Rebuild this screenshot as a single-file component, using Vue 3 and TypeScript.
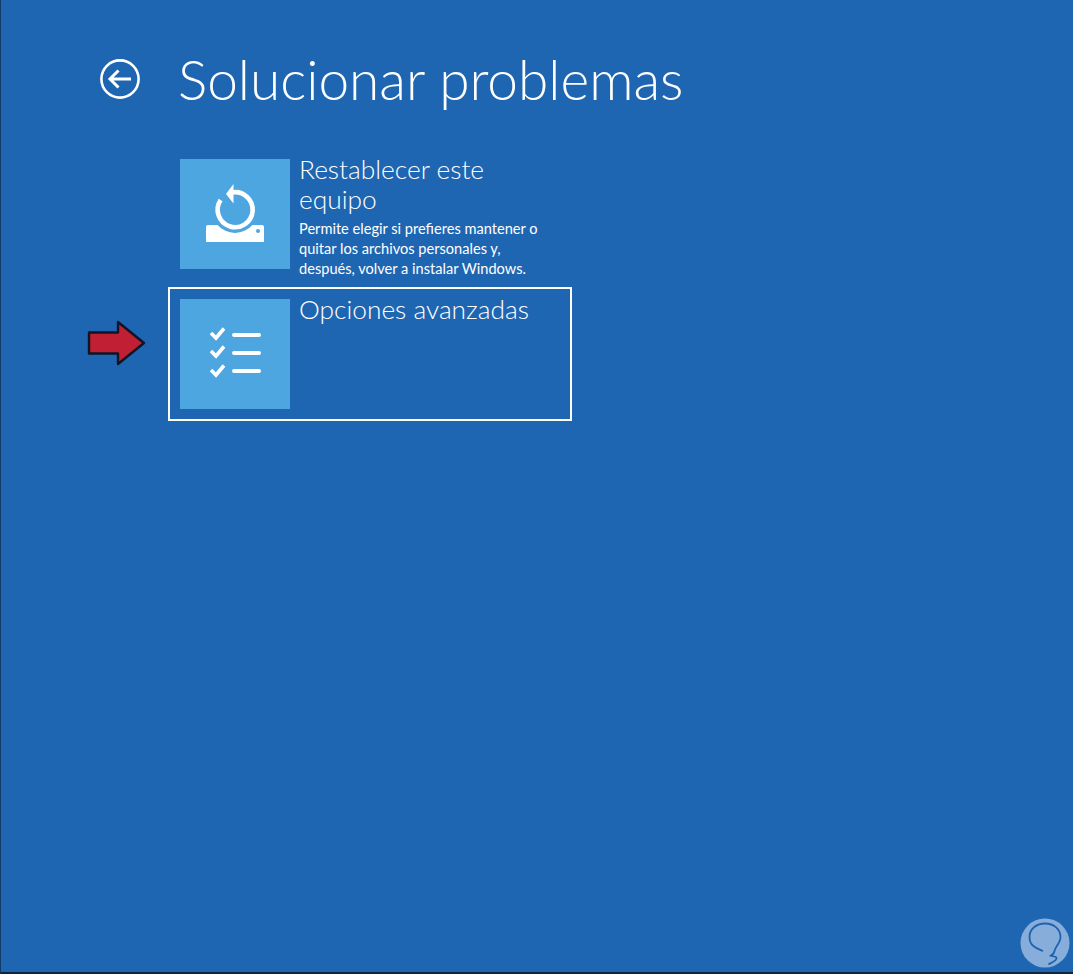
<script setup lang="ts">
const title = 'Solucionar problemas'
</script>

<template>
  <main class="screen">
    <header class="head">
      <svg class="back" width="42" height="42" viewBox="0 0 42 42" fill="none" stroke="#fff">
        <circle cx="21" cy="21" r="18.6" stroke-width="2.6" />
        <path d="M10.5 21H32M19.5 12.5 11 21l8.5 8.5" stroke-width="3" />
      </svg>
      <h1>{{ title }}</h1>
    </header>

    <section class="list">
      <div class="item">
        <div class="tile">
          <svg width="60" height="60" viewBox="0 0 60 60">
            <path d="M1 43Q1 41 3 41H12.600A23 23 0 0 0 47.400 41H57Q59 41 59 43V58H1Z" fill="#fff" />
            <circle cx="53" cy="47" r="2" fill="#4da6df" />
            <path d="M27 8.500A17.500 17.500 0 1 1 15.600 16" fill="none" stroke="#fff" stroke-width="4.600" />
            <path d="M21 10 28.500 0V19.500Z" fill="#fff" />
          </svg>
        </div>
        <div class="copy">
          <h2>Restablecer este<br />equipo</h2>
          <p>Permite elegir si prefieres mantener o<br />quitar los archivos personales y,<br />después, volver a instalar Windows.</p>
        </div>
      </div>

      <div class="item focus">
        <div class="tile">
          <svg width="54" height="54" viewBox="0 0 54 54" fill="none" stroke="#fff" stroke-width="3.600">
            <path d="M3 6l5 5 8-9.500M3 24l5 5 8-9.500M3 43l5 5 8-9.500" />
            <path d="M26 8h25M26 26h25M26 44h25" stroke-linecap="round" stroke-width="4" />
          </svg>
        </div>
        <div class="copy">
          <h2>Opciones avanzadas</h2>
        </div>

        <svg class="pointer" width="60" height="46" viewBox="0 0 60 46">
          <path d="M2 12.500h29V2l26 21-26 21V33.500H2z" fill="#c11f33" stroke="#0d1526" stroke-width="2.400" stroke-linejoin="round" />
        </svg>
      </div>
    </section>

    <div class="mark">
      <svg width="50" height="50" viewBox="0 0 50 50" fill="none">
        <circle cx="25" cy="25" r="24.500" fill="#87aedb" />
        <path d="M22 31C15 28 8.500 26 8.500 17 8.500 8.500 16 3.500 24 3.500c9 0 15.500 6 15.500 13.500 0 6-5 9-6 14-.5 2.500-2.500 4-4 4.500-2 .5 7 .5 6 3-1 3-6 4.500-8 6" stroke="#1f62ae" stroke-width="1.800" transform="translate(1 2)" />
      </svg>
    </div>
  </main>
</template>

<style scoped>
.screen {
  position: relative;
  box-sizing: border-box;
  width: 1073px;
  height: 974px;
  padding: 46px 0 0 98px;
  background: #1f66b2;
  border-left: 1px solid #123b66;
  border-bottom: 2px solid #10263f;
  font-family: Lato, Roboto, "Liberation Sans", sans-serif;
  color: #fff;
  overflow: hidden;
}
.head {
  display: flex;
  align-items: center;
  gap: 37px;
  height: 66px;
}
.back {
  flex: none;
}
h1 {
  margin: 0;
  font-size: 55px;
  font-weight: 300;
  line-height: 66px;
  white-space: nowrap;
}
.list {
  display: flex;
  flex-direction: column;
  margin: 35px 0 0 69px;
  width: 404px;
}
.item {
  position: relative;
  box-sizing: border-box;
  display: flex;
  align-items: flex-start;
  gap: 9px;
  padding: 10px;
  border: 2px solid transparent;
  height: 140px;
}
.focus {
  height: 134px;
  border-color: #fff;
}
.tile {
  flex: none;
  display: flex;
  align-items: center;
  justify-content: center;
  width: 110px;
  height: 110px;
  background: #4da6df;
}
.copy {
  margin-top: -5px;
}
h2 {
  margin: 0;
  font-size: 26.300px;
  font-weight: 300;
  line-height: 30px;
  white-space: nowrap;
}
p {
  margin: 5px 0 0;
  font-size: 14.600px;
  font-weight: 400;
  line-height: 20px;
  white-space: nowrap;
}
.pointer {
  position: absolute;
  left: -83px;
  top: 31px;
}
.mark {
  position: absolute;
  right: 3px;
  bottom: 4px;
  display: flex;
}
</style>
